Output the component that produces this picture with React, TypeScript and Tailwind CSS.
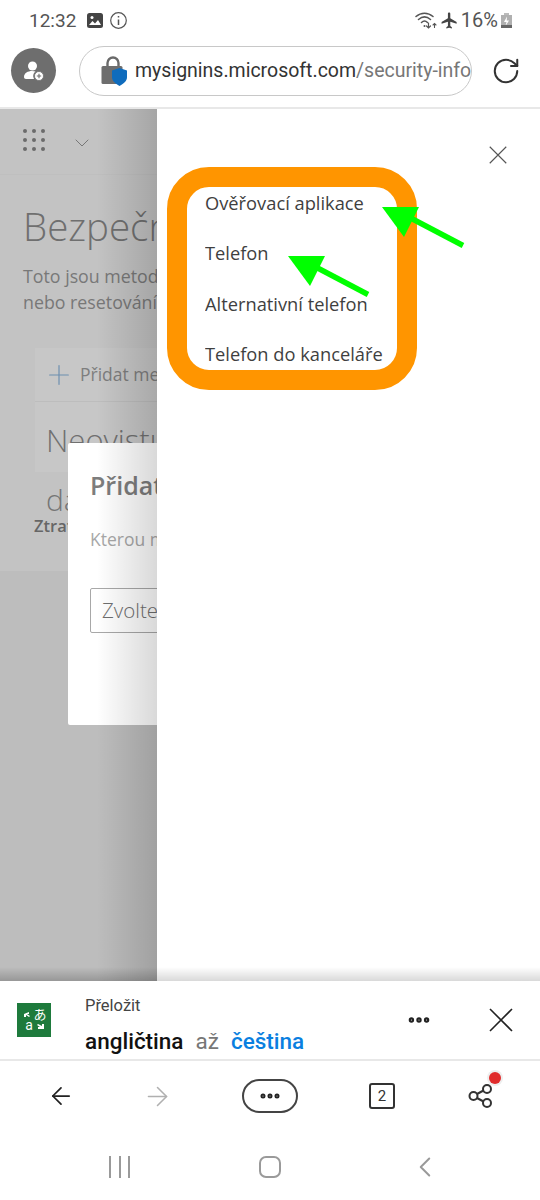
import React from "react";
import { ChevronDown, Plus, RotateCw, ArrowLeft, ArrowRight, Ellipsis, ChevronLeft } from "lucide-react";
import { MdFlight } from "react-icons/md";

const roboto = "font-['Roboto',sans-serif]";
const seg = "font-['Open_Sans',sans-serif]";

function Cross({ size, color, width }: { size: number; color: string; width: number }) {
  return (
    <svg width={size} height={size} viewBox="0 0 24 24" fill="none" stroke={color} strokeWidth={width}>
      <path d="M1 1l22 22M23 1L1 23" />
    </svg>
  );
}

function Status() {
  return (
    <div className={`flex h-[40px] items-center justify-between pl-[29px] pr-[28px] text-[#555] ${roboto}`}>
      <div className="flex items-center">
        <span className="text-[19px] leading-none">12:32</span>
        <svg width="16" height="15" viewBox="0 0 16 15" className="ml-[11px]">
          <rect width="16" height="15" rx="2.500" fill="#444" />
          <path d="M2 12l3.500-4 2.500 2.500 3-3.500 3 5z" fill="#fff" />
          <circle cx="5" cy="4.500" r="1.500" fill="#fff" />
        </svg>
        <svg width="17" height="17" viewBox="0 0 17 17" fill="none" stroke="#555" strokeWidth="1.200" className="ml-[7px]">
          <circle cx="8.500" cy="8.500" r="7.800" />
          <path d="M8.500 7.500v5.500M8.500 4v1.600" strokeWidth="1.500" />
        </svg>
      </div>
      <div className="flex items-center">
        <svg width="23" height="18" viewBox="0 0 23 18" fill="none" stroke="#555" strokeWidth="1.500" strokeLinecap="round">
          <path d="M1 5.500C6 1 13 1 18 5.500M3.500 8.500C7.500 5 11.500 5 15.500 8.500M6.500 11.500C8.500 9.500 10.500 9.500 12.500 11.500" />
          <path d="M13.500 12v4.500M11.500 15l2 2 2-2" strokeWidth="1.200" />
          <path d="M19.500 16.500v-4M18 14l1.500-1.500L21 14" strokeWidth="1.100" />
          <circle cx="9.500" cy="15" r="1" fill="#555" stroke="none" />
        </svg>
        <MdFlight size={19} className="ml-[2px] text-[#444]" />
        <span className="ml-[2px] text-[20px] leading-none">16%</span>
        <svg width="11" height="15" viewBox="0 0 11 15" className="ml-[3px]">
          <rect x="3" width="5" height="2" fill="#bbb" />
          <rect y="2" width="11" height="13" fill="#b0b0b0" />
          <path d="M6 3.500L3 9h2.500L4.500 13 8 7.500H5.700z" fill="#fff" />
          <rect y="12" width="11" height="3" fill="#666" />
        </svg>
      </div>
    </div>
  );
}

function AddressBar() {
  return (
    <div className="flex h-[69px] items-center border-b-2 border-[#e8e8e8] pb-[6px] pl-[11px] pr-[16px]">
      <div className="flex h-[45px] w-[45px] shrink-0 items-center justify-center rounded-full bg-[#6e6e6e]">
        <svg width="24" height="24" viewBox="0 0 24 24">
          <circle cx="10.500" cy="7" r="4.500" fill="#fff" />
          <path d="M2 18c0-4 4-6 8-6 1.500 0 2.500.2 3.500.6A6 6 0 0 0 12 20H4c-1.200 0-2-.8-2-2z" fill="#fff" />
          <circle cx="17" cy="17" r="4.500" fill="#fff" stroke="#6e6e6e" strokeWidth="0.800" />
          <path d="M17 14.800v4.400M14.800 17h4.400" stroke="#6e6e6e" strokeWidth="1.100" />
        </svg>
      </div>
      <div className="ml-[23px] flex h-[50px] w-[393px] shrink-0 items-center overflow-hidden rounded-full border border-[#c8c8c8] pl-[21px] pr-[0px]">
        <svg width="27" height="32" viewBox="0 0 26 32" className="mt-[1px] shrink-0">
          <path d="M6 12V8a5.500 5.500 0 0 1 11 0v4" fill="none" stroke="#6a6a6a" strokeWidth="2.400" />
          <rect x="0" y="11" width="21" height="18" rx="1.500" fill="#6e6e6e" />
          <path d="M18 13l7.500 2.500V22c0 4-3 6.500-7.500 9-4.500-2.500-7.500-5-7.500-9v-6.500z" fill="#0f6cbd" />
        </svg>
        <div className={`ml-[7px] overflow-hidden whitespace-nowrap text-[19.500px] ${roboto}`}>
          <span className="text-[#333]">mysignins.microsoft.com</span>
          <span className="text-[#777]">/security-info</span>
        </div>
      </div>
      <RotateCw size={30} strokeWidth={1.600} className="ml-[19px] text-[#333]" />
    </div>
  );
}

function LeftPage() {
  return (
    <div className={`relative w-[157px] shrink-0 overflow-hidden bg-[#bdbdbd] ${seg}`}>
      <div className="h-[462px] bg-[#c3c3c3]">
        <div className="flex h-[66px] items-center border-b border-[#bfbfbf] pb-[4px] pl-[23px]">
          <div className="grid grid-cols-3 gap-[5px]">
            {Array.from({ length: 9 }).map((_, i) => (
              <span key={i} className="h-[4px] w-[4px] rounded-full bg-[#6b6b6b]" />
            ))}
          </div>
          <ChevronDown size={24} strokeWidth={1} className="ml-[25px] mt-[6px] text-[#777]" />
        </div>
        <div className="ml-[23px] mt-[25px] whitespace-nowrap text-[38.500px] font-light leading-[52px] text-[#6f6f6f]">Bezpečnostní</div>
        <div className="ml-[23px] mt-[11px] whitespace-nowrap text-[17.800px] leading-[26px] text-[#787878]">
          <div>Toto jsou metody</div>
          <div>nebo resetování hesla</div>
        </div>
        <div className="ml-[35px] mt-[33px] w-[200px] bg-[#c7c7c7]">
          <div className="flex h-[54px] items-center border-b border-[#bdbdbd] pl-[8px]">
            <Plus size={32} strokeWidth={0.900} className="text-[#6d8fb0]" />
            <span className="ml-[5px] whitespace-nowrap text-[17.500px] text-[#7e7e7e]">Přidat metodu</span>
          </div>
          <div className="h-[70px] whitespace-nowrap pl-[11px] pt-[17px] text-[31px] font-light leading-[42px] text-[#707070]">Neovistu</div>
        </div>
        <div className="ml-[46px] mt-[10px] whitespace-nowrap text-[30px] font-light leading-[36px] text-[#757575]">da</div>
        <div className="ml-[34px] mt-[-1px] whitespace-nowrap text-[16.500px] font-semibold leading-[18px] text-[#666]">Ztratili</div>
      </div>
      <div className="absolute left-[68px] top-[334px] h-[282px] w-[120px] rounded-[2px] bg-white pl-[22px] pt-[22px]">
        <div className="whitespace-nowrap text-[25px] font-semibold leading-[40px] text-[#7d7d7d]">Přidat metodu</div>
        <div className="mt-[20px] whitespace-nowrap text-[17.500px] leading-[28px] text-[#a8a8a8]">Kterou metodu</div>
        <div className="mt-[35px] flex h-[45px] w-[120px] items-center rounded-[2px] border border-[#a8a8a8] pl-[11px] text-[20.500px] font-light text-[#6f6f6f]">Zvolte</div>
      </div>
      <div className="absolute inset-y-0 right-0 w-[60px] bg-gradient-to-r from-black/0 to-black/15" />
      <div className="absolute inset-x-0 bottom-0 h-[14px] bg-gradient-to-b from-black/0 to-black/20" />
    </div>
  );
}

function MenuItem({ children }: { children: string }) {
  return <div className="h-[50.400px] whitespace-nowrap text-[18.300px] leading-[34px] text-[#3f3f3f]">{children}</div>;
}

function RightPanel() {
  return (
    <div className={`relative flex-1 bg-white ${seg}`}>
      <div className="flex justify-end pr-[33px] pt-[37px]">
        <Cross size={18} color="#555" width={1.500} />
      </div>
      <div className="ml-[10px] mt-[3px] h-[223px] w-[250px] overflow-hidden rounded-[42px] border-[20px] border-[#ff9500] bg-white pl-[18px]">
        <div className="-mt-[1px] h-[184px] overflow-hidden">
          <MenuItem>Ověřovací aplikace</MenuItem>
          <MenuItem>Telefon</MenuItem>
          <MenuItem>Alternativní telefon</MenuItem>
          <MenuItem>Telefon do kanceláře</MenuItem>
        </div>
      </div>
      <svg className="absolute left-0 top-0" width="383" height="300" viewBox="157 109 383 300">
        <path d="M382 207h37l-15 30z" fill="#00ff00" />
        <path d="M463 245.500L403 214" stroke="#00ff00" strokeWidth="5.500" />
        <path d="M288 256h37l-15 30z" fill="#00ff00" />
        <path d="M368 294.500L310 264" stroke="#00ff00" strokeWidth="5.500" />
      </svg>
      <div className="absolute inset-x-0 bottom-0 h-[14px] bg-gradient-to-b from-black/0 to-black/15" />
    </div>
  );
}

function TranslateBar() {
  return (
    <div className={`flex h-[80px] items-center border-b-2 border-[#e8e8e8] bg-white pl-[17px] pr-[27px] ${roboto}`}>
      <svg width="34" height="34" viewBox="0 0 34 34" className="shrink-0">
        <rect width="34" height="34" fill="#1e7a3c" />
        <path d="M7 11l5-2v2H10l3 2-1 1-3-2v2H7z" fill="#fff" />
        <path d="M27 26l-6 0v-2h2l-3-2 1-1 4 2v-2h2z" fill="#fff" />
        <text x="23" y="16" fontSize="13" fill="#fff" fontFamily="Noto Sans CJK JP" textAnchor="middle">あ</text>
        <text x="12" y="27" fontSize="14" fill="#fff" fontFamily="Roboto" textAnchor="middle">a</text>
      </svg>
      <div className="ml-[34px] mt-[10px] flex-1">
        <div className="text-[16.500px] leading-[20px] text-[#444]">Přeložit</div>
        <div className="mt-[12px] flex items-baseline text-[22.500px] leading-[26px]">
          <span className="font-medium text-[#111]">angličtina</span>
          <span className="ml-[12px] text-[#777]">až</span>
          <span className="ml-[12px] font-medium text-[#0a7fe0]">čeština</span>
        </div>
      </div>
      <Ellipsis size={26} strokeWidth={3} className="mr-[57px] text-[#222]" />
      <Cross size={24} color="#222" width={1.600} />
    </div>
  );
}

function BottomNav() {
  return (
    <div className={`flex h-[74px] items-center pb-[4px] ${roboto}`}>
      <ArrowLeft size={28} strokeWidth={1.500} className="ml-[47px] text-[#222]" />
      <ArrowRight size={31} strokeWidth={1.200} className="ml-[67px] text-[#b0b0b0]" />
      <div className="ml-[69px] flex h-[34px] w-[56px] items-center justify-center rounded-full border-2 border-[#444]">
        <Ellipsis size={24} strokeWidth={3} className="text-[#222]" />
      </div>
      <div className="ml-[71px] flex h-[26px] w-[26px] items-center justify-center rounded-[3px] border-2 border-[#333] text-[15px] text-[#333]">2</div>
      <div className="relative ml-[72px] h-[26px] w-[26px]">
        <svg width="26" height="26" viewBox="0 0 26 26" fill="none" stroke="#333" strokeWidth="2">
          <circle cx="6.500" cy="13" r="4" />
          <circle cx="20" cy="6" r="4" />
          <circle cx="20" cy="20" r="4" />
          <path d="M10 11l6.500-3.500M10 15l6.500 3.500" />
        </svg>
        <span className="absolute -right-[8px] -top-[11px] h-[12px] w-[12px] rounded-full bg-[#e02b2b] shadow-[0_0_0_2px_#eee]" />
      </div>
    </div>
  );
}

function SystemNav() {
  return (
    <div className="flex h-[65px] items-start pt-[21px]">
      <div className="ml-[109px] flex h-[22px] gap-[7.500px]">
        <span className="w-[2px] bg-[#9a9a9a]" />
        <span className="w-[2px] bg-[#9a9a9a]" />
        <span className="w-[2px] bg-[#9a9a9a]" />
      </div>
      <div className="ml-[129px] h-[22px] w-[22px] rounded-[7px] border-2 border-[#9a9a9a]" />
      <ChevronLeft size={34} strokeWidth={1.400} className="ml-[127px] -mt-[6px] text-[#9a9a9a]" />
    </div>
  );
}

export default function App() {
  return (
    <div className="flex h-[1200px] w-[540px] flex-col overflow-hidden bg-white">
      <Status />
      <AddressBar />
      <div className="flex h-[872px] shrink-0">
        <LeftPage />
        <RightPanel />
      </div>
      <TranslateBar />
      <BottomNav />
      <SystemNav />
    </div>
  );
}
